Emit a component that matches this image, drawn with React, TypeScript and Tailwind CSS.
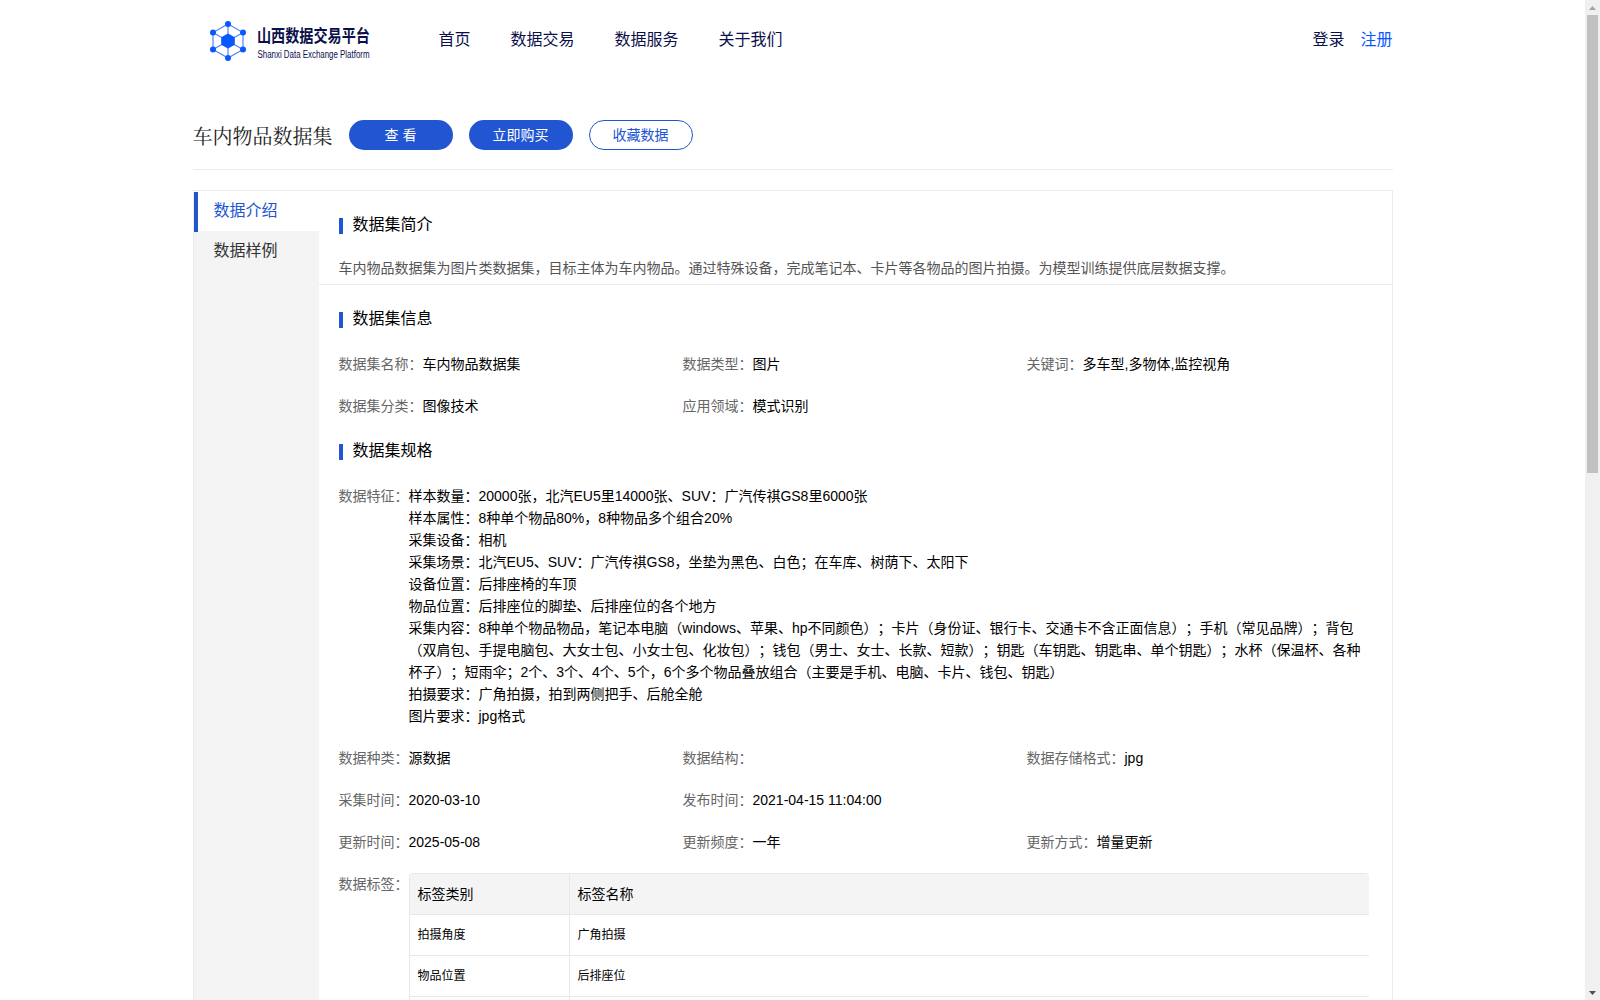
import type { ReactNode } from "react";

const navItems = ["首页", "数据交易", "数据服务", "关于我们"];

const features = [
  "样本数量：20000张，北汽EU5里14000张、SUV：广汽传祺GS8里6000张",
  "样本属性：8种单个物品80%，8种物品多个组合20%",
  "采集设备：相机",
  "采集场景：北汽EU5、SUV：广汽传祺GS8，坐垫为黑色、白色；在车库、树荫下、太阳下",
  "设备位置：后排座椅的车顶",
  "物品位置：后排座位的脚垫、后排座位的各个地方",
  "采集内容：8种单个物品物品，笔记本电脑（windows、苹果、hp不同颜色）；卡片（身份证、银行卡、交通卡不含正面信息）；手机（常见品牌）；背包（双肩包、手提电脑包、大女士包、小女士包、化妆包）；钱包（男士、女士、长款、短款）；钥匙（车钥匙、钥匙串、单个钥匙）；水杯（保温杯、各种杯子）；短雨伞；2个、3个、4个、5个，6个多个物品叠放组合（主要是手机、电脑、卡片、钱包、钥匙）",
  "拍摄要求：广角拍摄，拍到两侧把手、后舱全舱",
  "图片要求：jpg格式",
];

const tags = [
  ["拍摄角度", "广角拍摄"],
  ["物品位置", "后排座位"],
  ["", ""],
];

const Logo = () => (
  <svg width="180" height="44" viewBox="0 0 180 44" className="shrink-0 overflow-visible">
    <g stroke="#4d84ff" strokeWidth="1.2" fill="none">
      <path d="M18 4 33 12.5V29.5L18 38 3 29.5V12.5Z" />
      <path d="M18 4V38M3 12.5 33 29.5M33 12.5 3 29.5" />
    </g>
    <g fill="#0a56ff">
      <path d="M18 13.5 24.8 17.2V24.8L18 28.5 11.2 24.8V17.2Z" />
      <circle cx="18" cy="4" r="3" />
      <circle cx="33" cy="12.5" r="3" />
      <circle cx="33" cy="29.5" r="3" />
      <circle cx="18" cy="38" r="3" />
      <circle cx="3" cy="29.5" r="3" />
      <circle cx="3" cy="12.5" r="3" />
    </g>
    <g fill="#0b104b">
      <text x="47" y="22" fontSize="17" fontWeight="700" textLength="113" lengthAdjust="spacingAndGlyphs">
        山西数据交易平台
      </text>
      <text x="47.5" y="38" fontSize="10" textLength="112" lengthAdjust="spacingAndGlyphs">
        Shanxi Data Exchange Platform
      </text>
    </g>
  </svg>
);

const SectionTitle = ({ children }: { children: ReactNode }) => (
  <h2 className="flex h-6 items-center text-base leading-6">
    <span className="mr-[10px] mt-[3px] h-4 w-1 bg-[#2155d1]" />
    <span className="pt-px">{children}</span>
  </h2>
);

const Field = ({ label, value }: { label: string; value?: string }) => (
  <div className="flex w-[344px] shrink-0">
    <span className="text-[#666]">{label}：</span>
    <span>{value}</span>
  </div>
);

const Scrollbar = () => (
  <div className="flex w-[15px] shrink-0 flex-col items-center bg-[#f0f0f0]">
    <div className="flex h-[15px] items-center">
      <svg width="7" height="4" viewBox="0 0 7 4" className="mt-[1px]">
        <path d="M0 4 3.5 0 7 4Z" fill="#a3a3a3" />
      </svg>
    </div>
    <div className="h-[458px] w-[11px] bg-[#c1c1c1]" />
    <div className="mt-auto flex h-[15px] items-center">
      <svg width="7" height="4" viewBox="0 0 7 4">
        <path d="M0 0 3.5 4 7 0Z" fill="#505050" />
      </svg>
    </div>
  </div>
);

const App = () => {
  return (
    <div className="flex h-[1000px] overflow-hidden bg-white font-['Liberation_Sans','Noto_Sans_CJK_SC',sans-serif] text-sm leading-[22px] text-black [text-spacing-trim:space-all]">
      <div className="min-w-0 flex-1 overflow-hidden">
        <div className="mx-auto w-[1200px]">
          {/* Top bar */}
          <header className="flex h-20 pl-[17px] text-base text-[#0b104b]">
            <div className="mt-5 w-[229px]">
              <Logo />
            </div>
            <nav className="flex h-[79px] items-center gap-10">
              {navItems.map((item) => (
                <a key={item}>{item}</a>
              ))}
            </nav>
            <div className="ml-auto flex h-[79px] items-center gap-4">
              <a>登录</a>
              <a className="text-[#0a56ff]">注册</a>
            </div>
          </header>

          {/* Title and actions */}
          <div className="flex h-[90px] items-center gap-4 border-b border-[#ebebeb] pt-[21px]">
            <h1 className="pt-0.5 font-['Noto_Serif_CJK_SC','Noto_Sans_CJK_SC',sans-serif] text-xl text-[#222]">
              车内物品数据集
            </h1>
            <button className="h-[30px] w-[104px] rounded-full bg-[#2155d1] text-white">查 看</button>
            <button className="h-[30px] w-[104px] rounded-full bg-[#2155d1] text-white">立即购买</button>
            <button className="h-[30px] w-[104px] rounded-full border border-[#2155d1] text-[#2155d1]">收藏数据</button>
          </div>

          <div className="mt-5 flex h-[900px] border border-[#ebebeb]">
            {/* Side tabs */}
            <aside className="w-[125px] shrink-0 bg-[#f4f4f4] text-base text-[#333]">
              <div className="h-10 bg-white pt-px">
                <div className="flex h-10 items-center border-l-4 border-[#2155d1] pb-[3px] pl-4 text-[#2155d1]">数据介绍</div>
              </div>
              <div className="flex h-10 items-center pl-5">数据样例</div>
            </aside>

            <main className="min-w-0 flex-1">
              <section className="h-[94px] border-b border-[#ebebeb] px-5 pt-[21px]">
                <SectionTitle>数据集简介</SectionTitle>
                <p className="mt-[21px] text-[#555]">
                  车内物品数据集为图片类数据集，目标主体为车内物品。通过特殊设备，完成笔记本、卡片等各物品的图片拍摄。为模型训练提供底层数据支撑。
                </p>
              </section>

              <section className="px-5 pt-[21px]">
                <SectionTitle>数据集信息</SectionTitle>
                <div className="mt-[23px] flex flex-wrap gap-y-5">
                  <Field label="数据集名称" value="车内物品数据集" />
                  <Field label="数据类型" value="图片" />
                  <Field label="关键词" value="多车型,多物体,监控视角" />
                  <Field label="数据集分类" value="图像技术" />
                  <Field label="应用领域" value="模式识别" />
                </div>
              </section>

              <section className="pl-5 pt-[21px]">
                <SectionTitle>数据集规格</SectionTitle>
                <div className="mt-[23px] flex">
                  <span className="w-[70px] shrink-0 text-[#666]">数据特征：</span>
                  <div className="w-[954px]">
                    {features.map((line) => (
                      <p key={line}>{line}</p>
                    ))}
                  </div>
                </div>
                <div className="mt-5 flex w-[1032px] flex-wrap gap-y-5">
                  <Field label="数据种类" value="源数据" />
                  <Field label="数据结构" />
                  <Field label="数据存储格式" value="jpg" />
                  <div className="flex w-full">
                    <Field label="采集时间" value="2020-03-10" />
                    <Field label="发布时间" value="2021-04-15 11:04:00" />
                  </div>
                  <Field label="更新时间" value="2025-05-08" />
                  <Field label="更新频度" value="一年" />
                  <Field label="更新方式" value="增量更新" />
                </div>
                <div className="mt-5 flex">
                  <span className="w-[70px] shrink-0 text-[#666]">数据标签：</span>
                  <div className="w-[960px] rounded-t border-l border-t border-[#e8e8e8]">
                    <div className="flex h-[41px] rounded-t border-b border-[#e8e8e8] bg-[#f4f4f4] leading-10">
                      <div className="w-[160px] border-r border-[#e8e8e8] pl-2">标签类别</div>
                      <div className="pl-2">标签名称</div>
                    </div>
                    {tags.map(([type, name], i) => (
                      <div key={i} className="flex h-[41px] border-b border-[#e8e8e8] text-xs leading-10">
                        <div className="w-[160px] border-r border-[#e8e8e8] pl-2">{type}</div>
                        <div className="pl-2">{name}</div>
                      </div>
                    ))}
                  </div>
                </div>
              </section>
            </main>
          </div>
        </div>
      </div>
      <Scrollbar />
    </div>
  );
};

export default App;
